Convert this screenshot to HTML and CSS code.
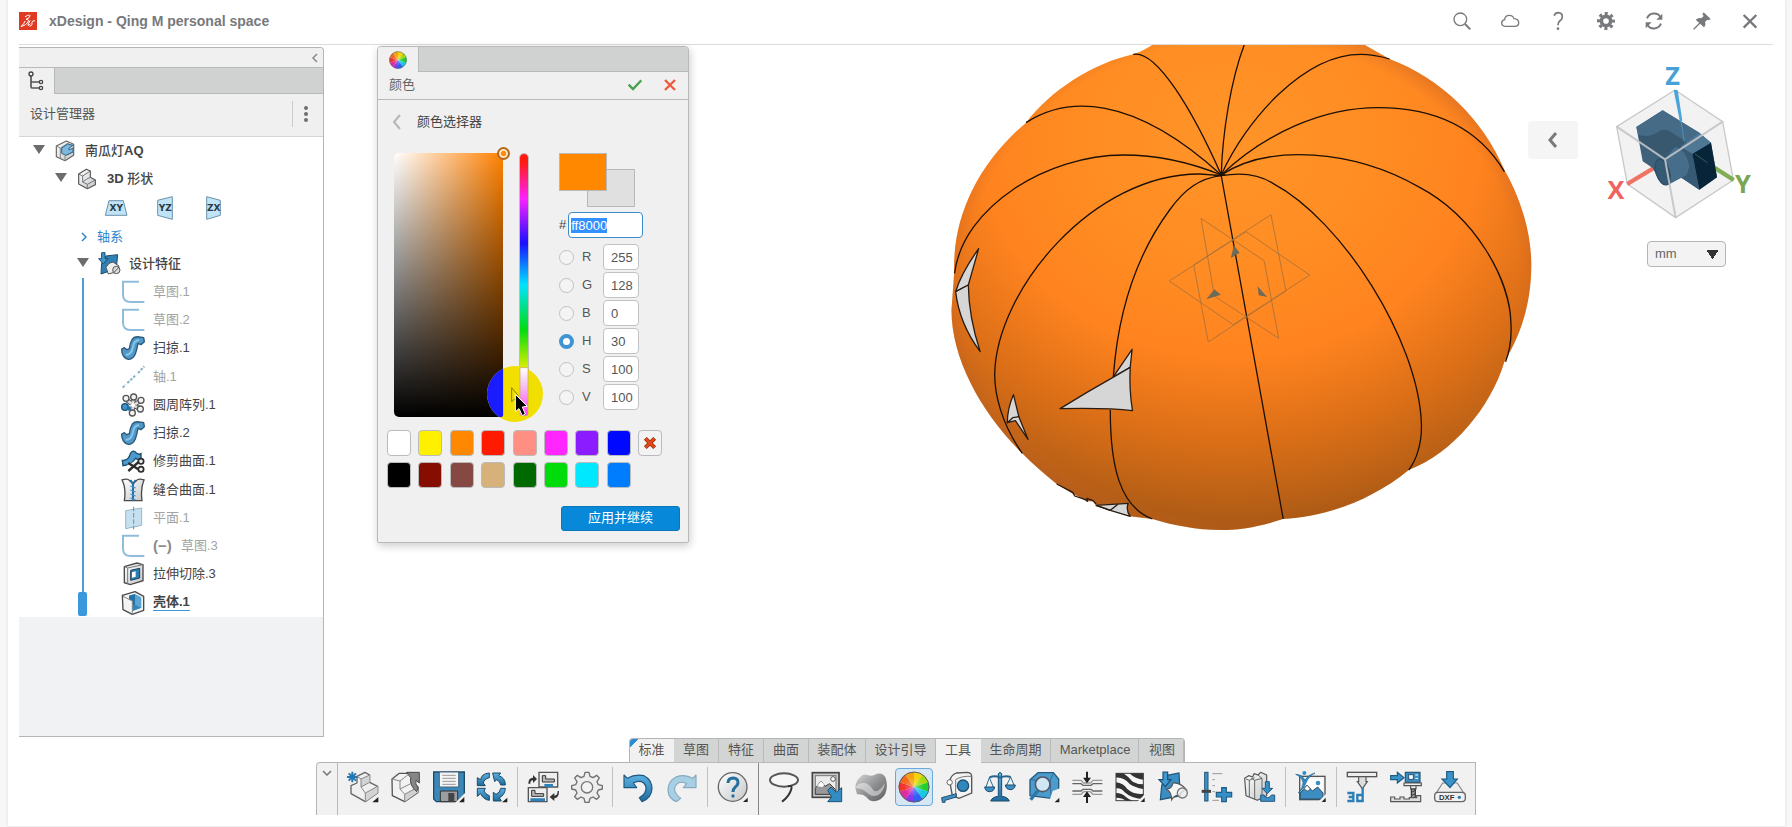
FILE: index.html
```html
<!DOCTYPE html>
<html lang="zh-CN">
<head>
<meta charset="utf-8">
<title>xDesign - Qing M personal space</title>
<link rel="stylesheet" href="styles.css">
</head>
<body>
<svg class="defs" aria-hidden="true">
  <defs>
    <linearGradient id="gBlue" x1="0" y1="0" x2="0" y2="1"><stop offset="0" stop-color="#5bb2e2"/><stop offset="1" stop-color="#1f6a9c"/></linearGradient>
    <linearGradient id="gGray" x1="0" y1="0" x2="1" y2="1"><stop offset="0" stop-color="#ffffff"/><stop offset="1" stop-color="#c4c6c8"/></linearGradient>
    <linearGradient id="gDark" x1="0" y1="0" x2="1" y2="1"><stop offset="0" stop-color="#d6d7d8"/><stop offset=".5" stop-color="#8f9193"/><stop offset="1" stop-color="#5b5d5f"/></linearGradient>
    <radialGradient id="gHub"><stop offset="0" stop-color="#fff" stop-opacity=".35"/><stop offset="1" stop-color="#fff" stop-opacity="0"/></radialGradient>
  </defs>
  <symbol id="i-sketch" viewBox="0 0 72 72"><path d="M54 5H6V44Q6 66 30 66H70" fill="none" stroke="#8fbcdb" stroke-width="6"/></symbol>
  <symbol id="i-sweep" viewBox="0 0 72 72"><path d="M3 50L2 39L10 35L17 41L25 38Q26 22 34 9Q42 0 56 3L68 5L70 17L60 26L51 22Q48 40 43 54Q36 70 22 70Q8 68 3 50Z" fill="#4f98c8" stroke="#2a5878" stroke-width="4" stroke-linejoin="round"/><path d="M14 56Q30 58 35 36Q38 14 54 12" fill="none" stroke="#8ac4e6" stroke-width="6"/></symbol>
  <symbol id="i-wheel" viewBox="0 0 96 96">
    <g transform="translate(48 48)">
      <path d="M0 0V-46A46 46 0 0 1 27-37.200Z" fill="#f5d30a"/><path d="M0 0L27-37.200A46 46 0 0 1 43.700-14.200Z" fill="#a5d90c"/>
      <path d="M0 0L43.700-14.200A46 46 0 0 1 43.700 14.200Z" fill="#1fcf2c"/><path d="M0 0L43.700 14.200A46 46 0 0 1 27 37.200Z" fill="#17c8e2"/>
      <path d="M0 0L27 37.200A46 46 0 0 1 0 46Z" fill="#2f62f2"/><path d="M0 0V46A46 46 0 0 1-27 37.200Z" fill="#8d35ea"/>
      <path d="M0 0L-27 37.200A46 46 0 0 1-43.700 14.200Z" fill="#e02b9c"/><path d="M0 0L-43.700 14.200A46 46 0 0 1-43.700-14.200Z" fill="#f0352f"/>
      <path d="M0 0L-43.700-14.200A46 46 0 0 1-27-37.200Z" fill="#f4691c"/><path d="M0 0L-27-37.200A46 46 0 0 1 0-46Z" fill="#f7a012"/>
      <circle r="30" fill="url(#gHub)"/><circle r="45" fill="none" stroke="#55606a" stroke-width="3"/>
    </g>
  </symbol>
  <symbol id="i-part" viewBox="0 0 60 66"><path d="M5 18L28 4L40 9V28L55 36V50L31 62L5 48Z" fill="url(#gGray)" stroke="#555" stroke-width="3.500" stroke-linejoin="round"/><path d="M5 18L17 24L40 9M17 24V42L31 49L55 36M31 49V62M17 42L28 34L40 28" fill="none" stroke="#777" stroke-width="3"/></symbol>
</svg>

<div class="frame">
  <header class="topbar">
    <svg class="logo" viewBox="0 0 54 54" aria-hidden="true"><rect width="54" height="54" fill="#e03a22"/><path d="M19 14Q32 6 33 11Q33 18 21 22Q31 21 27 30Q22 40 6 44Q15 35 18 28M33 26Q25 38 27 40Q30 42 33 36M47 26Q38 26 39 31Q42 40 33 43" fill="none" stroke="#fff" stroke-width="3" stroke-linecap="round"/></svg>
    <h1 class="title">xDesign - Qing M personal space</h1>
    <nav class="top-actions" aria-label="窗口">
      <button aria-label="搜索"><svg viewBox="0 0 60 60"><circle cx="25" cy="25" r="19" fill="none" stroke="#77797c" stroke-width="4"/><path d="M39 39L55 55" stroke="#77797c" stroke-width="6"/></svg></button>
      <button aria-label="云"><svg viewBox="0 0 60 60"><path d="M16 46Q5 45 5 36Q5 28 14 26Q15 13 28 13Q39 13 42 23Q56 24 56 35Q56 46 44 46Z" fill="none" stroke="#77797c" stroke-width="4"/></svg></button>
      <button aria-label="帮助"><svg viewBox="0 0 60 60"><path d="M18 14Q22 5 31 5Q43 6 43 17Q43 25 35 30Q30 34 30 43" fill="none" stroke="#77797c" stroke-width="5"/><circle cx="30" cy="53" r="4" fill="#77797c"/></svg></button>
      <button aria-label="设置"><svg viewBox="0 0 60 60"><circle cx="30" cy="30" r="14" fill="none" stroke="#77797c" stroke-width="11"/><circle cx="30" cy="30" r="22" fill="none" stroke="#77797c" stroke-width="10" stroke-dasharray="9 8.280" stroke-dashoffset="4.500"/></svg></button>
      <button aria-label="刷新"><svg viewBox="0 0 60 60"><path d="M9 22A23 23 0 0 1 50 19M51 38A23 23 0 0 1 10 41" fill="none" stroke="#77797c" stroke-width="6"/><path d="M55 8V26H37ZM5 52V34H23Z" fill="#77797c"/></svg></button>
      <button aria-label="固定"><svg viewBox="0 0 60 60"><path d="M35 4L56 24L50 28L46 26L39 33Q43 42 36 49L11 26Q20 18 28 22L35 15L31 10Z" fill="#77797c"/><path d="M24 36L5 55" stroke="#77797c" stroke-width="4"/></svg></button>
      <button aria-label="关闭"><svg viewBox="0 0 60 60"><path d="M11 12L49 50M49 12L11 50" stroke="#77797c" stroke-width="7"/></svg></button>
    </nav>
  </header>

  <main class="stage">
    <svg class="model" viewBox="0 15 1568 1485" preserveAspectRatio="none" role="img" aria-label="南瓜灯模型">
      <defs>
        <radialGradient id="skin" gradientUnits="userSpaceOnUse" cx="760" cy="300" r="1210"><stop offset="0" stop-color="#ff9428"/><stop offset=".3" stop-color="#ff8d23"/><stop offset=".54" stop-color="#ff831f"/><stop offset=".74" stop-color="#dc6f17"/><stop offset=".88" stop-color="#bd6216"/><stop offset="1" stop-color="#a05415"/></radialGradient>
        <radialGradient id="rim" gradientUnits="userSpaceOnUse" cx="790" cy="720" r="775"><stop offset=".93" stop-color="#d96c24" stop-opacity="0"/><stop offset="1" stop-color="#c06024" stop-opacity=".4"/></radialGradient>
        <path id="body" d="M555 15H1110L1175 57C1310 115 1420 240 1475 390C1525 490 1548 600 1545 690C1543 800 1515 890 1475 965C1440 1100 1340 1240 1225 1290C1130 1380 1010 1430 897 1437C830 1462 780 1470 735 1470C670 1470 610 1456 555 1437L497 1429L445 1411L408 1396L400 1384L385 1384L345 1360L305 1332C270 1300 240 1270 215 1240C110 1120 30 960 30 810L37 700C32 530 100 370 225 248C290 150 400 70 505 43C525 36 540 24 555 15Z"/>
      </defs>
      <use href="#body" fill="url(#skin)"/><use href="#body" fill="url(#rim)"/>
      <g class="ribs">
        <path d="M795 15C760 120 738 280 735 405C660 210 565 28 505 43"/>
        <path d="M225 248C330 170 500 160 735 405"/>
        <path d="M38 700C60 500 280 345 480 345C570 345 660 370 735 405"/>
        <path d="M215 1240C160 1150 142 1060 143 1000C148 750 400 400 680 402L735 407"/>
        <path d="M555 1437C470 1400 445 1280 445 1110M453 1010C465 820 510 650 600 510C640 445 680 415 735 407L897 1437"/>
        <path d="M735 407C780 398 830 400 870 430C1050 540 1250 900 1258 1150C1260 1210 1245 1260 1225 1290"/>
        <path d="M735 405C860 310 1080 330 1250 440C1400 530 1490 720 1492 850C1494 890 1490 930 1478 965"/>
        <path d="M735 405C850 280 1000 203 1145 203C1300 203 1410 270 1475 395"/>
        <path d="M735 405C800 240 950 43 1100 43C1130 43 1155 50 1175 57"/>
        <path d="M716 407L746 404" stroke-width="3"/>
      </g>
      <g class="cuts">
        <path d="M502 928L497 982L452 1012Z" fill="#cbb5a8"/><path d="M497 982Q494 1050 503 1112Q440 1103 314 1106Q385 1055 452 1012Z"/>
        <path d="M101 626L74 735L41 755Q55 700 101 626Z" fill="#cbb5a8"/><path d="M41 755L74 735Q75 830 105 935Q50 850 41 755Z" fill="#e0dfdd"/>
        <path d="M192 1064L206 1130L176 1148Q176 1105 192 1064Z" fill="#d5c5bb"/><path d="M176 1148L190 1133L206 1130L230 1198L197 1142Z" fill="#e4e2e0"/>
        <path d="M408 1396L492 1390Q485 1410 497 1429L445 1411Z" fill="#eeeae5"/><path d="M445 1411L465 1393M408 1396L445 1411"/>
        <path class="cut-edge" d="M305 1332L347 1357L352 1368L378 1378L385 1384L384 1375L400 1382L408 1392"/>
      </g>
      <g class="datum">
        <path d="M682 535L847 662L885 895L717 768ZM865 524L904 753L701 906L663 675ZM599 723L800 575L966 705L766 854Z"/>
        <path class="datum-arrow" d="M768 616L783 638L760 655ZM717 748L734 764L696 778ZM830 739L855 771L833 766Z"/>
      </g>
    </svg>

    <aside class="manager">
      <div class="manager-top"><button class="plain" aria-label="折叠"><svg width="8" height="10" viewBox="0 0 8 10"><path d="M6 1L2 5L6 9" fill="none" stroke="#888" stroke-width="1.500"/></svg></button></div>
      <div class="tabstrip"><button class="tabstrip-tab manager-tab" aria-label="设计树"><svg width="16" height="20" viewBox="0 0 48 60"><path d="M9 10V47Q9 51 14 51H36M9 33H36" fill="none" stroke="#555" stroke-width="5"/><g fill="#f1f1f1" stroke="#444" stroke-width="4"><circle cx="9" cy="9" r="6"/><circle cx="39" cy="33" r="5"/><circle cx="39" cy="51" r="5"/></g></svg></button></div>
      <div class="manager-head"><h2 class="manager-title">设计管理器</h2><button class="more" aria-label="更多"><i></i><i></i><i></i></button></div>
      <div class="tree">
        <div class="row root"><i class="caret"></i>
          <svg class="ico20" viewBox="0 0 60 66"><path d="M4 18L34 3L56 13V46L30 62L4 50Z" fill="url(#gGray)" stroke="#666" stroke-width="3.500" stroke-linejoin="round"/><path d="M4 18L16 24V54M16 24L42 8M30 48V62M30 48L56 34" fill="none" stroke="#888" stroke-width="3"/><path d="M20 24L38 12L54 16L42 24V30L54 24V36L32 46L20 40Z" fill="#7cb9dc" stroke="#2f6389" stroke-width="3"/></svg>
          <span>南瓜灯<b>AQ</b></span></div>
        <div class="row shape"><i class="caret"></i><svg class="ico20"><use href="#i-part"/></svg><span><b>3D</b> 形状</span></div>
        <div class="row planes">
          <svg viewBox="0 0 72 72"><path d="M15 14H58L69 58H4Z" fill="#bfe3f7" stroke="#6b92aa" stroke-width="3"/><text x="37" y="46" class="ax">XY</text></svg>
          <svg viewBox="0 0 72 72"><path d="M14 13L58 2V70L14 58Z" fill="#bfe3f7" stroke="#6b92aa" stroke-width="3"/><text x="37" y="46" class="ax">YZ</text></svg>
          <svg viewBox="0 0 72 72"><path d="M14 2L55 13V58L14 70Z" fill="#bfe3f7" stroke="#6b92aa" stroke-width="3"/><text x="35" y="46" class="ax">ZX</text></svg>
        </div>
        <div class="row axes"><svg width="6" height="10" viewBox="0 0 6 10"><path d="M1 1L5 5L1 9" fill="none" stroke="#2b86cc" stroke-width="1.500"/></svg><a href="#axes">轴系</a></div>
        <div class="row feats-head"><i class="caret"></i>
          <svg class="ico24" viewBox="0 0 72 72"><path d="M26 12L62 8L58 50L12 66L14 34Z" fill="#2f80b5" stroke="#1e4c6c" stroke-width="3"/><path d="M14 2H24V20H33L19 36L5 20H14Z" fill="#3f97cf" stroke="#1c4d70" stroke-width="3"/><path d="M27 46L36 34L48 30L66 42L56 60L34 66Z" fill="#eee" stroke="#555" stroke-width="3"/><circle cx="58" cy="54" r="11" fill="#ddd" stroke="#555" stroke-width="3"/><path d="M50 62L66 46" stroke="#555" stroke-width="3"/></svg>
          <span>设计特征</span></div>
        <div class="features">
          <div class="rail"><i class="rail-line"></i><i class="rail-grip"></i></div>
          <ul class="feature-list">
            <li class="off"><svg class="ico24"><use href="#i-sketch"/></svg>草图.1</li>
            <li class="off"><svg class="ico24"><use href="#i-sketch"/></svg>草图.2</li>
            <li><svg class="ico24"><use href="#i-sweep"/></svg>扫掠.1</li>
            <li class="off"><svg class="ico24" viewBox="0 0 72 72"><path d="M5 68L14 59M19 54L46 29M51 24L70 4" fill="none" stroke="#86afc9" stroke-width="6" stroke-dasharray="8 4"/></svg>轴.1</li>
            <li><svg class="ico24" viewBox="0 0 72 72"><path d="M15 20L32 32M38 12L36 30M59 22L42 34M57 47L42 40M33 57L36 42" stroke="#555" stroke-width="14"/><path d="M15 20L32 32M38 12L36 30M59 22L42 34M57 47L42 40M33 57L36 42" stroke="#ddd" stroke-width="8"/><g fill="#f2f2f2" stroke="#555" stroke-width="4"><circle cx="15" cy="16" r="9"/><circle cx="38" cy="12" r="9"/><circle cx="60" cy="22" r="9"/><circle cx="58" cy="48" r="9"/><circle cx="34" cy="60" r="9"/></g><circle cx="12" cy="42" r="10" fill="#3f94cc" stroke="#1c4d70" stroke-width="4"/><circle cx="23" cy="46" r="7" fill="#2773a6"/></svg>圆周阵列.1</li>
            <li><svg class="ico24"><use href="#i-sweep"/></svg>扫掠.2</li>
            <li><svg class="ico24" viewBox="0 0 72 72"><path d="M4 34Q22 36 28 14Q36 0 46 12Q54 18 60 14L60 30Q50 34 44 28Q36 38 28 46L6 50Z" fill="#4b9acb" stroke="#1c4d70" stroke-width="4"/><path d="M16 50L46 34L64 40L40 56Z" fill="#f3f3f3"/><path d="M22 42L54 62M22 66L54 38" stroke="#2b2b2b" stroke-width="7"/><circle cx="60" cy="37" r="8" fill="#eee" stroke="#2b2b2b" stroke-width="5"/><circle cx="60" cy="61" r="8" fill="#eee" stroke="#2b2b2b" stroke-width="5"/></svg>修剪曲面.1</li>
            <li><svg class="ico24" viewBox="0 0 72 72"><path d="M3 6Q20 0 26 8L36 16L46 8Q52 0 69 6Q58 30 63 68H10Q16 30 3 6Z" fill="url(#gGray)" stroke="#4a4a4a" stroke-width="4"/><path d="M28 6L36 18L44 6M36 18V68" fill="none" stroke="#256c9c" stroke-width="6"/><path d="M28 24L44 30M28 36L44 42M28 48L44 54M28 60L44 66" stroke="#3f97cf" stroke-width="4"/></svg>缝合曲面.1</li>
            <li class="off"><svg class="ico24" viewBox="0 0 72 72"><path d="M14 14L62 6V58L14 68Z" fill="#c5e1f0" stroke="#96b7c8" stroke-width="3"/><path d="M38 2V70" stroke="#7b8c95" stroke-width="3" stroke-dasharray="14 5"/></svg>平面.1</li>
            <li class="off"><svg class="ico24"><use href="#i-sketch"/></svg><b class="minus">(−)</b>草图.3</li>
            <li><svg class="ico24" viewBox="0 0 72 72"><path d="M10 14L48 3L66 8V56L28 68L10 62Z" fill="url(#gGray)" stroke="#4a4a4a" stroke-width="4"/><path d="M10 14L20 18V66M20 18L66 8" fill="none" stroke="#777" stroke-width="3"/><path d="M29 25L56 19V48L29 55Z" fill="#2f7eb3" stroke="#1c3f58" stroke-width="3"/><path d="M33 31L44 28V44L33 47Z" fill="#fff"/></svg>拉伸切除.3</li>
            <li class="current"><svg class="ico24" viewBox="0 0 72 72"><path d="M4 13L42 2L68 16V58L34 70L6 56Z" fill="#f3f4f5" stroke="#4a4a4a" stroke-width="4" stroke-linejoin="round"/><path d="M24 14L42 9L61 19V50L34 60V30L24 24Z" fill="#5aa6d2"/><path d="M24 14L42 9V42L34 46V30L24 24Z" fill="#2573a6"/><path d="M42 42L61 50L34 60V46Z" fill="#2f86bd"/><path d="M6 16L34 30V70" fill="none" stroke="#888" stroke-width="3"/></svg><a href="#shell">壳体.1</a></li>
          </ul>
        </div>
      </div>
      <div class="manager-foot"></div>
    </aside>

    <section class="dialog" aria-label="颜色">
      <div class="tabstrip"><button class="tabstrip-tab dialog-tab" aria-label="颜色"><svg width="18" height="18"><use href="#i-wheel"/></svg></button></div>
      <div class="dialog-head"><h2 class="dialog-title">颜色</h2>
        <button class="plain" aria-label="确定"><svg width="14" height="12" viewBox="0 0 42 36"><path d="M2 17L15 30L40 4" fill="none" stroke="#46a04c" stroke-width="7"/></svg></button>
        <button class="plain" aria-label="取消"><svg width="12" height="12" viewBox="0 0 36 36"><path d="M3 3L33 33M33 3L3 33" fill="none" stroke="#ef5a3c" stroke-width="7"/></svg></button>
      </div>
      <div class="dialog-body">
        <div class="picker-head"><button class="plain" aria-label="返回"><svg width="10" height="16" viewBox="0 0 10 16"><path d="M8 1L2 8L8 15" fill="none" stroke="#b4b6b8" stroke-width="2"/></svg></button><h3 class="picker-title">颜色选择器</h3></div>
        <div class="picker">
          <div class="sv"><i class="sv-knob"></i></div>
          <div class="hue"></div>
          <svg class="pointer" width="58" height="58" viewBox="0 0 174 174" aria-hidden="true">
            <defs><clipPath id="clipSv"><path d="M0 0H52V148Q52 157 43 157H0Z"/></clipPath><linearGradient id="gHue" x1="0" y1="0" x2="0" y2="1"><stop offset="0" stop-color="#fff"/><stop offset=".4" stop-color="#f6bdf3"/><stop offset="1" stop-color="#ff3cff"/></linearGradient></defs>
            <circle cx="87" cy="87" r="84" fill="#f1df00"/><circle cx="87" cy="87" r="84" fill="#1b1bff" clip-path="url(#clipSv)"/>
            <path d="M102 8H126V146Q126 152 120 152H108Q102 152 102 146Z" fill="url(#gHue)" stroke="#c0aa60" stroke-width="2"/>
            <path d="M77 68V110L97 92Z" fill="none" stroke="#8a8000" stroke-width="3"/>
            <path d="M88 88V140L99 131L109 152L118 147L109 126L124 124Z" fill="#000" stroke="#fff" stroke-width="3"/>
          </svg>
          <form class="values">
            <div class="compare"><i class="now"></i><i class="was"></i></div>
            <label class="hex"># <input id="hex" type="text" value="ff8000" aria-label="十六进制"></label>
            <div class="channel"><input type="radio" name="ch" id="cr"><label for="cr">R</label><input type="text" value="255" aria-label="R 值"></div>
            <div class="channel"><input type="radio" name="ch" id="cg"><label for="cg">G</label><input type="text" value="128" aria-label="G 值"></div>
            <div class="channel"><input type="radio" name="ch" id="cb"><label for="cb">B</label><input type="text" value="0" aria-label="B 值"></div>
            <div class="channel"><input type="radio" name="ch" id="chh" checked><label for="chh">H</label><input type="text" value="30" aria-label="H 值"></div>
            <div class="channel"><input type="radio" name="ch" id="cs"><label for="cs">S</label><input type="text" value="100" aria-label="S 值"></div>
            <div class="channel"><input type="radio" name="ch" id="cv"><label for="cv">V</label><input type="text" value="100" aria-label="V 值"></div>
          </form>
        </div>
        <div class="palette">
          <button class="c-white" aria-label="白"></button><button class="c-yellow" aria-label="黄"></button><button class="c-orange" aria-label="橙"></button><button class="c-red" aria-label="红"></button><button class="c-salmon" aria-label="浅红"></button><button class="c-magenta" aria-label="品红"></button><button class="c-purple" aria-label="紫"></button><button class="c-blue" aria-label="蓝"></button>
          <button class="c-none" aria-label="移除颜色"><svg width="14" height="14" viewBox="0 0 42 42"><path d="M7 7L35 35M35 7L7 35" stroke="#96270c" stroke-width="12"/><path d="M8 8L34 34M34 8L8 34" stroke="#e04a18" stroke-width="8"/></svg></button>
          <button class="c-black" aria-label="黑"></button><button class="c-maroon" aria-label="栗"></button><button class="c-brown" aria-label="棕"></button><button class="c-tan" aria-label="褐"></button><button class="c-dkgreen" aria-label="深绿"></button><button class="c-green" aria-label="绿"></button><button class="c-cyan" aria-label="青"></button><button class="c-azure" aria-label="天蓝"></button>
        </div>
        <div class="dialog-foot"><button class="apply">应用并继续</button></div>
      </div>
    </section>

    <div class="view-tools">
      <button class="drawer" aria-label="展开"><svg width="10" height="16" viewBox="0 0 10 16"><path d="M8 1L2 8L8 15" fill="none" stroke="#77797c" stroke-width="3"/></svg></button>
      <div class="orient">
        <svg class="cube" viewBox="561 165 441 495" role="img" aria-label="方向">
          <path d="M765 270L908 365L940 540L767 653L622 552L590 380Z" fill="#eeeeef" fill-opacity=".75" stroke="#c9c9c9" stroke-width="4"/>
          <path d="M728 488L622 552" stroke="#ee7465" stroke-width="13"/>
          <path d="M840 475L941 540" stroke="#7fae55" stroke-width="13"/>
          <path d="M728 331L838 398L873 428L891 532L838 569L782 532L742 556L712 530L698 504L668 484L649 381Z" fill="#3f627c"/>
          <path d="M728 331L838 398L800 425L748 392Q700 415 655 405L649 381Z" fill="#466b86"/>
          <path d="M655 405Q690 415 720 392Q735 385 750 395L802 428L735 478L660 430Z" fill="#385870"/>
          <path d="M838 398L873 428L817 462L782 440L800 425Z" fill="#4f7894"/>
          <path d="M817 462L873 428L891 532L838 569Z" fill="#072438"/>
          <path d="M782 440L817 462L838 569L782 532L775 500Z" fill="#365a74"/>
          <path d="M735 478L765 440Q800 450 808 500L800 525L742 556L712 530Q705 500 735 478Z" fill="#466e8a"/>
          <ellipse cx="728" cy="516" rx="20" ry="40" transform="rotate(-18 728 516)" fill="#355a74" stroke="#2c4f68" stroke-width="4"/>
          <path d="M761 270H773L787 362L780 366Z" fill="#4aa5d8"/><path d="M783 365L793 425" stroke="#4a93c0" stroke-width="3"/><path d="M825 462L862 488" stroke="#2f6350" stroke-width="3"/>
          <path d="M590 380L735 478L908 365M735 478L767 653" fill="none" stroke="#c2c4c6" stroke-width="6" stroke-opacity=".9"/>
          <text x="758" y="254" class="axis" fill="#45a1d6">Z</text><text x="588" y="597" class="axis" fill="#f0635f">X</text><text x="969" y="578" class="axis" fill="#7ba552">Y</text>
        </svg>
        <select class="units" aria-label="单位"><option>mm</option></select>
      </div>
    </div>

    <div class="dock">
      <div class="dock-tabs" role="tablist">
        <button class="on first" role="tab">标准</button><button role="tab">草图</button><button role="tab">特征</button><button role="tab">曲面</button><button role="tab">装配体</button><button role="tab">设计引导</button><button class="on" role="tab">工具</button><button role="tab">生命周期</button><button role="tab">Marketplace</button><button role="tab">视图</button>
      </div>
      <div class="toolbar" role="toolbar">
        <button class="fold" aria-label="折叠工具栏"><svg width="10" height="6" viewBox="0 0 10 6"><path d="M1 1L5 5L9 1" fill="none" stroke="#777" stroke-width="1.500"/></svg></button>
        <div class="tools">
          <div class="group">
            <button aria-label="新建"><svg viewBox="0 0 96 96"><path d="M12 44L30 36V16L54 4L68 12V34L92 46V66L55 92L12 68Z" fill="#f0f0f0" stroke="#666" stroke-width="4" stroke-linejoin="round"/><path d="M55 66L92 46V66L55 92ZM42 24L68 12V34L42 48Z" fill="#d2d3d4"/><path d="M30 16L42 24L68 12M42 24V48L55 66L92 46M55 66V92M42 48L68 34" fill="none" stroke="#888" stroke-width="3"/><path d="M16 2V34M0 18H32M5 7L27 29M27 7L5 29" stroke="#2478b2" stroke-width="6"/><path d="M94 78V94H76Z" fill="#222"/></svg></button>
            <button aria-label="打开"><svg viewBox="0 0 96 96"><path d="M6 24L28 7H72V38L84 48V64L44 92L7 74Z" fill="#f2f2f2" stroke="#555" stroke-width="4" stroke-linejoin="round"/><path d="M44 70L84 48V64L44 92Z" fill="#cfd0d1"/><path d="M6 24L30 30L58 8M30 30V54L44 70L84 48M44 70V92M30 54L62 38" fill="none" stroke="#888" stroke-width="3"/><path d="M50 4H88V36L78 28Q74 38 84 50L80 62Q58 44 62 20Z" fill="#858585" stroke="#4a4a4a" stroke-width="3"/></svg></button>
            <button aria-label="保存"><svg viewBox="0 0 96 96"><path d="M2 3H94V92H10L2 84Z" fill="#3b87b9" stroke="#1f4b69" stroke-width="4"/><path d="M19 3H77V48H19Z" fill="#f4f4f4" stroke="#44687f" stroke-width="3"/><path d="M28 13H68M28 22H68M28 31H68M28 40H68" stroke="#999" stroke-width="3"/><path d="M22 60H74V92H22Z" fill="#9b9da0" stroke="#333" stroke-width="3"/><rect x="46" y="66" width="18" height="24" fill="#444"/><path d="M96 66V96H66Z" fill="#f1f1f1"/><path d="M94 78V94H78Z" fill="#222"/></svg></button>
            <button aria-label="更新"><svg viewBox="0 0 96 96"><g fill="url(#gBlue)" stroke="#1d4b6b" stroke-width="3" stroke-linejoin="round"><path d="M40 6Q16 8 14 26L4 20V44H28L22 36Q24 24 40 20Z"/><path d="M50 6H74L68 14Q88 20 88 42H74Q72 30 62 26L56 32Z"/><path d="M4 52H28L24 60Q28 70 40 74V88Q22 86 14 68L4 76Z"/><path d="M88 52Q86 74 70 80L76 90H52V64L60 70Q72 66 74 52Z"/></g><path d="M94 80V94H78Z" fill="#222"/></svg></button>
          </div>
          <i class="sep"></i>
          <div class="group wide">
            <button aria-label="替换"><svg viewBox="0 0 96 96"><path d="M36 4H92V48H36ZM4 50H60V92H4Z" fill="#eee" stroke="#555" stroke-width="4"/><path d="M46 14H56V24H82V33H46ZM14 58H24V68H50V76H14Z" fill="#bbb" stroke="#333" stroke-width="3"/><path d="M52 39H78V48H52ZM10 82H54V91H10Z" fill="#2f80b8"/><path d="M4 38Q4 20 18 20V12L30 24L18 36V28Q10 28 10 38ZM92 60Q92 74 82 74V66L68 78L82 90V82Q96 82 96 60Z" fill="#333"/></svg></button>
            <button aria-label="选项"><svg viewBox="0 0 96 96"><path d="M42 4H54L57 16L66 20L77 13L85 21L78 32L82 41L94 44V54L82 57L78 66L85 77L77 85L66 78L57 82L54 94H42L39 82L30 78L19 85L11 77L18 66L14 57L2 54V44L14 41L18 32L11 21L19 13L30 20L39 16Z" fill="#ededed" stroke="#707070" stroke-width="4" stroke-linejoin="round"/><circle cx="48" cy="49" r="17" fill="#f3f3f3" stroke="#777" stroke-width="4"/></svg></button>
          </div>
          <i class="sep"></i>
          <div class="group wide">
            <button aria-label="撤销"><svg viewBox="0 0 96 96"><path d="M6 12L16 22Q40 8 66 14Q90 26 90 54Q88 82 60 92L52 80Q74 68 72 48Q66 28 44 32L34 36L44 50H6Z" fill="url(#gBlue)" stroke="#1f587f" stroke-width="3.500" stroke-linejoin="round"/></svg></button>
            <button aria-label="重做"><svg viewBox="0 0 96 96"><path d="M90 12L80 22Q56 8 30 18Q6 30 6 58Q8 84 32 92L44 82Q24 68 26 50Q32 32 52 34L62 38L52 50H90Z" fill="#a8cfe4" stroke="#83aac0" stroke-width="3.500" stroke-linejoin="round"/></svg></button>
          </div>
          <i class="sep"></i>
          <div class="group"><button aria-label="帮助"><svg viewBox="0 0 96 96"><circle cx="47" cy="48" r="43" fill="url(#gGray)" stroke="#666" stroke-width="4"/><path d="M33 36Q34 21 48 21Q64 22 63 36Q62 44 54 49Q48 54 48 63" fill="none" stroke="#236f9f" stroke-width="9"/><circle cx="48" cy="75" r="5" fill="#236f9f"/><path d="M96 72V96H72Z" fill="#f1f1f1"/><path d="M92 80V93H78Z" fill="#222"/></svg></button></div>
          <i class="sep strong"></i>
          <div class="group grow">
            <button aria-label="套索"><svg viewBox="0 0 96 96"><ellipse cx="48" cy="27" rx="42" ry="20" fill="#f6f6f6" stroke="#555" stroke-width="6"/><path d="M60 46Q74 42 70 54Q64 76 42 92" fill="none" stroke="#333" stroke-width="6"/></svg></button>
            <button aria-label="图片"><svg viewBox="0 0 96 96"><rect x="4" y="5" width="80" height="74" fill="#c9c9c9" stroke="#444" stroke-width="5"/><rect x="13" y="14" width="62" height="56" fill="#ececec" stroke="#777" stroke-width="3"/><path d="M13 52L30 30L42 46L56 38L74 56V70H13Z" fill="#999" stroke="#444" stroke-width="3"/><path d="M18 46L30 30L40 42L34 48Z" fill="#fff"/><circle cx="66" cy="24" r="7" fill="#fff" stroke="#555" stroke-width="3"/><path d="M50 58L60 48L76 64L92 50V92H50L62 78Z" fill="#338cc2" stroke="#1c5378" stroke-width="3"/></svg></button>
            <button aria-label="曲面"><svg viewBox="0 0 96 96"><path d="M1 50Q2 28 16 18Q24 8 38 12Q50 18 66 8Q84 4 92 20Q98 40 94 58Q90 80 70 88Q48 96 36 80Q24 68 6 70Z" fill="url(#gDark)"/><path d="M1 50Q10 34 30 36Q44 40 54 56Q66 72 90 36Q86 62 70 72Q52 80 40 68Q24 52 1 50Z" fill="#fff" fill-opacity=".45"/></svg></button>
            <button class="active" aria-label="颜色"><svg><use href="#i-wheel"/></svg></button>
            <button aria-label="测量"><svg viewBox="0 0 96 96"><path d="M26 30Q30 12 46 6L80 4Q92 6 92 16V66L54 82L34 74Z" fill="#f3f3f3" stroke="#555" stroke-width="4"/><path d="M44 26Q62 14 92 16M44 26V76" fill="none" stroke="#777" stroke-width="3"/><circle cx="66" cy="44" r="17" fill="#3288bd" stroke="#1d4f71" stroke-width="4"/><circle cx="26" cy="34" r="8" fill="#fff" stroke="#666" stroke-width="3"/><path d="M2 80L46 68V78L12 88V94H4Z" fill="#3d8fc4" stroke="#235070" stroke-width="3"/></svg></button>
            <button aria-label="质量"><svg viewBox="0 0 96 96"><path d="M43 8Q48 0 53 8V76Q72 78 76 90H20Q24 78 43 76Z" fill="url(#gBlue)" stroke="#1d4b6b" stroke-width="3"/><path d="M16 20Q32 12 48 20Q64 12 80 18" fill="none" stroke="#25658f" stroke-width="6"/><path d="M16 20L6 48M16 20L28 48M80 18L68 42M80 18L90 42" stroke="#2c6c96" stroke-width="3"/><path d="M2 48H32Q30 62 17 62Q4 62 2 48ZM64 42H94Q92 56 79 56Q66 56 64 42Z" fill="#3c8fc5" stroke="#1d4b6b" stroke-width="3"/></svg></button>
            <button aria-label="检查"><svg viewBox="0 0 96 96"><path d="M6 26L30 5H76L92 24V66L70 82L6 74Z" fill="#4b9ccd" stroke="#235b80" stroke-width="4"/><path d="M6 26L66 30L76 5M66 30L70 82" fill="none" stroke="#2b6f9c" stroke-width="3"/><circle cx="44" cy="40" r="22" fill="#cfe6f4" stroke="#556" stroke-width="5"/><path d="M30 58L8 86" stroke="#2d77a8" stroke-width="10"/><path d="M74 60L96 52V96H62Z" fill="#f1f1f1"/><path d="M94 80V94H80Z" fill="#222"/></svg></button>
            <button aria-label="压缩"><svg viewBox="0 0 96 96"><path d="M4 28H30L38 36H58L66 28H94M4 70H30L38 62H58L66 70H94" fill="none" stroke="#999" stroke-width="4"/><path d="M4 38H30L36 43H60L66 38H94M4 60H30L36 55H60L66 60H94" fill="none" stroke="#666" stroke-width="4"/><path d="M48 2V24M48 96V74" stroke="#222" stroke-width="6"/><path d="M36 20H60L48 37ZM36 78H60L48 61Z" fill="#222"/></svg></button>
            <button aria-label="斑马纹"><svg viewBox="0 0 96 96"><rect x="6" y="7" width="82" height="82" fill="#f6f6f6" stroke="#444" stroke-width="3"/><path d="M6 7H28Q42 16 56 32Q70 40 88 40V54Q62 50 48 40Q30 18 6 20ZM46 7H88V26Q64 24 46 7ZM6 34Q28 36 40 54Q60 72 88 68V84Q54 84 32 64Q22 50 6 52ZM6 66Q24 66 36 78Q44 86 56 89H36Q24 80 6 80Z" fill="#333"/><path d="M96 66V96H66Z" fill="#f1f1f1"/><path d="M92 80V93H80Z" fill="#222"/></svg></button>
            <button aria-label="插入曲面"><svg viewBox="0 0 96 96"><path d="M26 14L66 6L70 74L10 86L14 44Z" fill="#3b8ec4" stroke="#225377" stroke-width="3.500"/><path d="M18 3H32V26H42L25 47L6 26H18Z" fill="#3f9ad2" stroke="#1c4d70" stroke-width="3.500"/><path d="M28 54Q44 54 48 36Q70 34 88 56Q74 58 68 74Q54 70 44 86Q44 64 28 54Z" fill="#f5f5f5" stroke="#555" stroke-width="3.500"/><circle cx="76" cy="66" r="15" fill="#eee" fill-opacity=".8" stroke="#777" stroke-width="4"/></svg></button>
            <button aria-label="添加标尺"><svg viewBox="0 0 96 96"><rect x="11" y="4" width="10" height="86" fill="#3f93c8" stroke="#235578" stroke-width="3"/><path d="M2 61H30" stroke="#444" stroke-width="9"/><path d="M34 8H64M34 26H42M34 44H42M34 62H42M34 88H54" stroke="#999" stroke-width="3"/><path d="M62 50H76V64H92V78H76V92H62V78H46V64H62Z" fill="#3590c8" stroke="#225a82" stroke-width="3.500"/></svg></button>
            <button aria-label="导入库"><svg viewBox="0 0 96 96"><path d="M2 22L14 14L26 18L30 8L42 12L50 4L68 12V74L40 88L6 74Z" fill="url(#gGray)" stroke="#555" stroke-width="3.500" stroke-linejoin="round"/><path d="M6 24L16 28V78M22 22L32 28V84M42 12L54 22V84M32 28L54 22M16 28L32 20" fill="none" stroke="#666" stroke-width="3"/><path d="M64 32H76V52H86L70 68L54 52H64Z" fill="#3590c8" stroke="#225a82" stroke-width="3"/><path d="M50 72H60Q62 80 70 80Q80 80 82 72H92V91H50Z" fill="#3e8fc3" stroke="#225a82" stroke-width="3"/></svg></button>
          </div>
          <i class="sep"></i>
          <div class="group"><button aria-label="渲染"><svg viewBox="0 0 96 96"><rect x="14" y="16" width="76" height="70" fill="#f1f1f1" stroke="#555" stroke-width="4"/><rect x="21" y="23" width="62" height="56" fill="#fff"/><path d="M16 66L36 42L52 60L68 48L84 66V84H16Z" fill="#3c8dc1" stroke="#26516d" stroke-width="3"/><path d="M27 54L36 42L46 54L38 60Z" fill="#fff" stroke="#444" stroke-width="2"/><circle cx="69" cy="36" r="7" fill="#3a8fc5"/><path d="M2 10Q22 10 30 28Q38 12 60 6Q40 16 33 36Q28 52 10 66Q24 50 24 34Q20 18 2 10Z" fill="#2f8dcb" stroke="#1d6293" stroke-width="2"/><circle cx="28" cy="6" r="6" fill="#2f8dcb"/><path d="M96 66V96H66Z" fill="#f1f1f1"/><path d="M92 80V93H80Z" fill="#222"/></svg></button></div>
          <i class="sep"></i>
          <div class="group wide">
            <button aria-label="三维打印"><svg viewBox="0 0 96 96"><rect x="4" y="4" width="88" height="13" fill="#eee" stroke="#555" stroke-width="4"/><path d="M38 17H60V32H64L54 46L49 54L44 46L34 32H38Z" fill="#ddd" stroke="#555" stroke-width="3.500"/><path d="M4 66H22V90H4M8 78H22M50 50V90H34V72H50" fill="none" stroke="#2c7fb6" stroke-width="7"/></svg></button>
            <button aria-label="机加工"><svg viewBox="0 0 96 96"><path d="M2 14H22V4L42 20L22 36V26H2Z" fill="#3a93cb" stroke="#1f5b84" stroke-width="3.500"/><rect x="46" y="4" width="44" height="30" fill="#3e8dc0" stroke="#235474" stroke-width="3.500"/><rect x="56" y="11" width="14" height="14" fill="#fff" stroke="#235474" stroke-width="3"/><path d="M76 12H84M76 22H84" stroke="#fff" stroke-width="3"/><path d="M42 36H94V44H42ZM62 44H78V54H62Z" fill="#eee" stroke="#555" stroke-width="3.500"/><path d="M64 54H76V78L70 86L64 78Z" fill="#999" stroke="#333" stroke-width="3.500"/><path d="M64 64L76 58M64 74L76 68" stroke="#333" stroke-width="3"/><path d="M2 92V78H14V84H30V78H42V84H58V80H80V74H92V92Z" fill="#ddd" stroke="#555" stroke-width="3.500"/></svg></button>
            <button aria-label="导出 DXF"><svg viewBox="0 0 96 96"><path d="M4 70L26 36H70L92 70Z" fill="#eee" stroke="#888" stroke-width="3.500"/><rect x="2" y="64" width="92" height="28" rx="10" fill="#f1f1f1" stroke="#666" stroke-width="4"/><text x="38" y="87" class="dxf">DXF</text><circle cx="76" cy="79" r="5" fill="#2b7eb5"/><path d="M38 2H58V24H70L48 50L24 24H38Z" fill="#3a93cb" stroke="#1f5b84" stroke-width="3.500"/></svg></button>
          </div>
        </div>
      </div>
    </div>
  </main>
</div>
<script src="app.js"></script>
</body>
</html>
```
FILE: app.js
```js
const hex = document.getElementById('hex');
hex.focus();
hex.select();
```
FILE: styles.css
```css
* { box-sizing: border-box; }
body { margin: 0; background: #f7f7f7; color: #444; font: 13px/20px "Liberation Sans", "Noto Sans CJK SC", sans-serif; }
button, input, select { font: inherit; color: inherit; }
button { border: 0; background: none; padding: 0; }
svg { display: block; }
h1, h2, h3, ul { margin: 0; padding: 0; font: inherit; }
.defs { position: absolute; width: 0; height: 0; }
.plain { display: flex; align-items: center; }

.frame { display: flex; flex-direction: column; min-height: 100vh; margin: 0 7px 0 8px; background: #fff; border-bottom: 1px solid #ededed; box-shadow: 0 0 3px #ddd; }
.topbar { display: flex; align-items: center; height: 45px; margin: 0 12px 0 11px; padding-bottom: 2px; border-bottom: 1px solid #dcdcdc; }
.logo { width: 18px; height: 18px; }
.title { margin-left: 12px; font-size: 14px; font-weight: bold; color: #77797c; }
.top-actions { display: flex; gap: 28px; margin: 0 13px 0 auto; }
.top-actions svg { width: 20px; height: 20px; }

.stage { position: relative; flex: 1; padding: 2px 0 80px 11px; }
.model { position: absolute; left: 932px; top: 0; width: 600px; height: 495px; }
.ribs path { fill: none; stroke: #1c0f04; stroke-width: 1.3px; vector-effect: non-scaling-stroke; }
.cuts path { fill: #d6d6d6; stroke: #2a1c10; stroke-width: 1.3px; stroke-linejoin: round; vector-effect: non-scaling-stroke; }
.cuts .cut-edge { fill: none; }
.datum path { fill: none; stroke: #a3703c; stroke-opacity: .8; stroke-width: 1px; vector-effect: non-scaling-stroke; }
.datum .datum-arrow { fill: #6e6a58; stroke: none; }

.tabstrip { display: flex; background: #d0d2d1; border-bottom: 1px solid #b7b9ba; }
.tabstrip-tab { display: flex; align-items: center; justify-content: center; margin-bottom: -1px; background: #f0f0f0; border-right: 1px solid #b7b9ba; }

.manager { position: relative; width: 305px; border: 1px solid #b3b5b7; border-left: 0; border-top-right-radius: 4px; background: #fff; }
.manager-top { display: flex; justify-content: flex-end; height: 20px; padding-right: 4px; background: #f0f0f0; border-bottom: 1px solid #b7b9ba; border-top-right-radius: 4px; }
.manager .tabstrip { height: 26px; }
.manager-tab { width: 36px; height: 26px; padding-right: 2px; }
.manager-head { display: flex; align-items: center; height: 43px; padding: 0 0 2px 11px; background: #f0f0f0; border-bottom: 1px solid #d4d6d7; }
.manager-title { flex: 1; color: #555; }
.more { display: flex; flex-direction: column; align-items: center; justify-content: center; gap: 2px; width: 31px; height: 26px; padding-right: 5px; border-left: 1px solid #ccc; }
.more i { width: 4px; height: 4px; border-radius: 50%; background: #6c6e70; }
.row { display: flex; align-items: center; height: 28px; gap: 10px; white-space: pre; }
.caret { width: 12px; height: 9px; margin-bottom: 3px; background: #6a6c6e; clip-path: polygon(0 0, 100% 0, 50% 100%); }
.ico20 { width: 20px; height: 22px; }
.ico24 { width: 24px; height: 24px; }
.root { padding-left: 14px; font-weight: 500; }
.shape { padding-left: 36px; font-weight: 500; }
.planes { height: 30px; gap: 25px; padding-left: 85px; }
.planes svg { width: 24px; height: 24px; }
.ax { font: bold 27px "DejaVu Sans", sans-serif; text-anchor: middle; fill: #2a3a44; }
.axes { height: 27px; padding-left: 62px; gap: 10px; }
.axes a { color: #2b86cc; text-decoration: none; }
.feats-head { padding-left: 58px; gap: 8px; font-weight: 500; }
.features { display: flex; }
.rail { display: flex; flex-direction: column; align-items: center; width: 9px; margin: 0 34px 1px 59px; }
.rail-line { flex: 1; width: 2px; background: #4a9fd8; }
.rail-grip { width: 9px; height: 24px; border-radius: 2px; background: #3a98db; }
.feature-list { list-style: none; }
.feature-list li { display: flex; align-items: center; gap: 8px; height: 28px; }
.feature-list li:nth-child(4n) { height: 29px; }
.feature-list .off { color: #a3a3a3; }
.minus { width: 20px; color: #8a8a8a; font-size: 15px; }
.current a { font-weight: bold; color: #444; text-decoration: none; line-height: 16px; border-bottom: 1px solid #3a98db; }
.manager-foot { height: 119px; background: #f1f2f4; }

.dialog { position: absolute; left: 369px; top: 1px; width: 312px; background: #f0f0f0; border: 1px solid #b7b9bb; border-radius: 4px 4px 2px 2px; box-shadow: 1px 3px 8px rgba(0, 0, 0, .2); }
.dialog .tabstrip { height: 25px; border-radius: 3px 3px 0 0; }
.dialog-tab { width: 41px; height: 25px; border-top-left-radius: 3px; }
.dialog-head { display: flex; align-items: center; gap: 22px; height: 28px; padding: 0 12px 2px 11px; border-bottom: 1px solid #b7b9bb; }
.dialog-title { flex: 1; color: #666; }
.dialog-body { padding: 12px 8px 11px; }
.picker-head { display: flex; align-items: center; gap: 15px; padding-left: 6px; }
.picker { position: relative; display: flex; margin: 21px 0 13px; padding-left: 8px; }
.sv { position: relative; width: 109px; height: 264px; border-radius: 5px; background: linear-gradient(to top, #000, transparent), linear-gradient(to right, #fff, #ff8000); }
.sv-knob { position: absolute; right: -7px; top: -6px; width: 13px; height: 13px; border-radius: 50%; border: 2px solid #b2681c; background: radial-gradient(circle, #ff8a10 35%, #ffe3b8 45%); }
.hue { width: 8px; height: 262px; margin: 1px 31px 0 17px; border-radius: 4px; background: linear-gradient(to bottom, #ff1a10 3%, #ff20ff 17%, #1a10ff 34%, #00e4ff 50%, #00dc10 67%, #e0f000 82%, #ff3cff 100%); box-shadow: 0 0 0 1px #bdbdbd; }
.pointer { position: absolute; left: 100px; top: 212px; }
.values { display: flex; flex-direction: column; gap: 2px; }
.compare { position: relative; width: 76px; height: 54px; margin-bottom: 3px; }
.compare i { position: absolute; width: 48px; height: 38px; border: 1px solid #b8b8b8; }
.now { left: 0; top: 0; z-index: 1; background: #ff8800; }
.was { right: 0; bottom: 0; background: #e0e0e0; }
.values input[type="text"] { width: 36px; height: 26px; padding: 0 0 0 7px; border: 1px solid #c0c2c4; border-radius: 4px; background: #fff; color: #555; outline: 0; }
.hex { display: flex; align-items: center; gap: 2px; margin-bottom: 4px; }
.values .hex input { width: 75px; padding-left: 2px; border-color: #3a8dc8; }
.hex input::selection { background: #3390ff; color: #fff; }
.channel { display: flex; align-items: center; }
.channel label { width: 29px; padding-left: 8px; color: #555; }
.channel input[type="radio"] { appearance: none; width: 15px; height: 15px; margin: 0; border: 1px solid #bfc1c3; border-radius: 50%; background: #f4f4f4; }
.channel input[type="radio"]:checked { border: 4px solid #3f95d2; background: #fff; }
.palette { display: grid; grid-template-columns: repeat(9, 24px); justify-content: space-between; gap: 6px 0; padding: 0 18px 0 1px; }
.palette button { display: flex; align-items: center; justify-content: center; height: 26px; border: 1px solid #b9bbbd; border-radius: 4px; }
.c-white { background: #fff; } .c-yellow { background: #fff000; } .c-orange { background: #ff8800; }
.c-red { background: #ff1a00; } .c-salmon { background: #ff8f82; } .c-magenta { background: #ff26ff; }
.c-purple { background: #8a1cff; } .c-blue { background: #0008ff; } .c-none { background: #f3f3f3; }
.c-black { background: #000; } .c-maroon { background: #860e00; } .c-brown { background: #854843; }
.c-tan { background: #d6b17a; } .c-dkgreen { background: #006a00; } .c-green { background: #00dc0a; }
.c-cyan { background: #00e8ff; } .c-azure { background: #007dff; }
.dialog-foot { display: flex; justify-content: flex-end; margin-top: 18px; }
.apply { width: 119px; height: 25px; border: 1px solid #0a78b8; border-radius: 3px; background: #0788d8; color: #fff; line-height: 20px; padding-bottom: 2px; }

.view-tools { position: absolute; top: 10px; right: 31px; display: flex; gap: 29px; }
.drawer { display: flex; align-items: center; justify-content: center; width: 50px; height: 38px; margin-top: 66px; border-radius: 4px; background: #f5f5f5; }
.orient { display: flex; flex-direction: column; align-items: center; gap: 21px; }
.cube { width: 147px; height: 165px; }
.axis { font: bold 76px "Open Sans", sans-serif; text-anchor: middle; }
.units { width: 79px; height: 26px; margin-left: 12px; padding: 0 7px; border: 1px solid #b3b5b7; border-radius: 4px; color: #666; appearance: none; background: conic-gradient(from -31deg at 50% 100%, #333 62deg, transparent 0) right 6px center / 13px 9px no-repeat, #f3f3f3; }
.units { background: conic-gradient(from -35deg at 50% 100%, #333 70deg, transparent 0) right 6px center / 13px 9px no-repeat, #f3f3f3; }

.dock { position: absolute; left: 0; right: 1px; bottom: 11px; display: flex; flex-direction: column; align-items: center; }
.dock-tabs { display: flex; margin: 0 0 -1px 22px; border: solid #b3b5b7; border-width: 1px 1px 0; border-radius: 4px 4px 0 0; overflow: hidden; z-index: 1; }
.dock-tabs button { min-width: 45px; height: 24px; padding: 0 9px 2px; background: #d3d5d4; box-shadow: inset -1px -1px #b7b9ba; color: #555; }
.dock-tabs .on { background: #f1f1f1; box-shadow: none; }
.dock-tabs .first { min-width: 44px; background: linear-gradient(135deg, #2b8bd0 6px, transparent 6px), #f1f1f1; box-shadow: inset 0 -1px #b7b9ba; }
.toolbar { display: flex; width: 1160px; max-width: 100%; height: 53px; border: 1px solid #b3b5b7; border-bottom: 0; border-top-left-radius: 4px; background: #f1f1f1; }
.fold { display: flex; justify-content: center; width: 21px; padding-top: 7px; border-right: 1px solid #b7b9ba; }
.tools { flex: 1; display: flex; align-items: center; padding: 0 6px 4px; }
.group { display: flex; gap: 5px; }
.wide { gap: 6px; }
.grow { flex: 1; justify-content: space-between; gap: 0; }
.group button { display: flex; align-items: center; justify-content: center; width: 38px; height: 38px; border: 1px solid transparent; border-radius: 4px; }
.group svg { width: 32px; height: 32px; }
.group .active { border-color: #6aa9dc; background: #d6e6f3; }
.sep { width: 1px; height: 40px; margin: 0 6px; background: #bfc1c3; }
.strong { align-self: stretch; height: auto; margin-bottom: -4px; background: #888; }
.dxf { font: bold 23px "Liberation Sans", sans-serif; text-anchor: middle; fill: #333; }
```
